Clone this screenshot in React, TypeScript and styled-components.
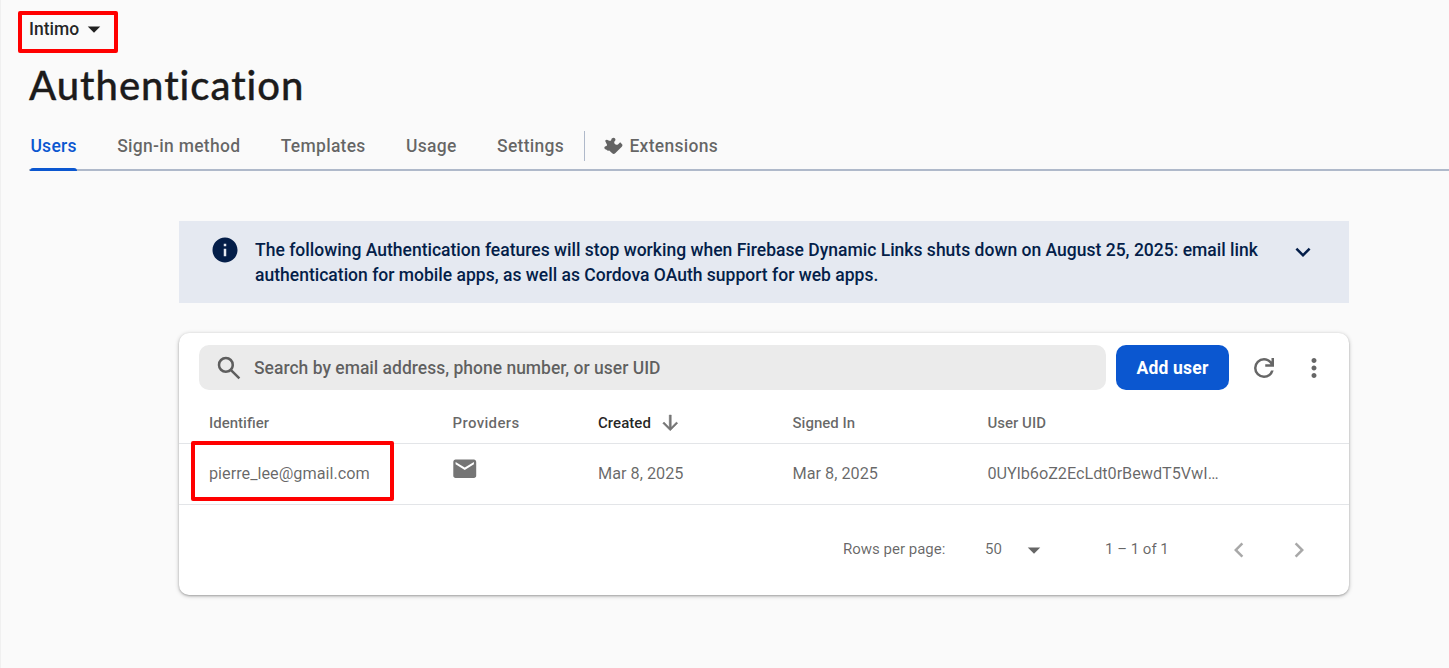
import React from "react";
import styled, { createGlobalStyle } from "styled-components";
import {
  MdArrowDropDown,
  MdChevronLeft,
  MdChevronRight,
  MdEmail,
  MdExpandMore,
  MdInfo,
  MdMoreVert,
} from "react-icons/md";

const GlobalStyle = createGlobalStyle`
  *, *::before, *::after { box-sizing: border-box; }
  body {
    margin: 0;
    background: #fafafa;
    font-family: Roboto, "Liberation Sans", sans-serif;
    color: rgba(0, 0, 0, 0.6);
  }
  button { font: inherit; color: inherit; background: none; border: 0; padding: 0; margin: 0; }
  h1, p { margin: 0; }
  svg { display: block; flex: none; }
`;

const Page = styled.div`
  height: 668px;
  overflow: hidden;
  border-left: 1px solid #f0f0f0;
  display: flex;
  flex-direction: column;
`;

const Header = styled.header`
  padding: 10px 0 0 28px;
`;

const Marker = styled.div<{ $inset: string }>`
  position: absolute;
  inset: ${(p) => p.$inset};
  border: 4px solid #ff0000;
  border-radius: 2px;
  pointer-events: none;
`;

const ProjectPicker = styled.button`
  position: relative;
  display: flex;
  align-items: center;
  height: 38px;
  padding-bottom: 1px;
  font-size: 17.5px;
  font-weight: 500;
  line-height: 38px;
  color: rgba(0, 0, 0, 0.87);
`;

const Title = styled.h1`
  height: 50px;
  margin-top: 12px;
  font-family: Lato, sans-serif;
  font-size: 40px;
  font-weight: 500;
  line-height: 50px;
  letter-spacing: 0.98px;
  -webkit-text-stroke: 0.35px #1c1b1b;
  color: #1c1b1b;
`;

const Tabs = styled.nav`
  display: flex;
  height: 61px;
  padding-left: 1px;
  border-bottom: 2px solid #afb9ca;
`;

const Tab = styled.button<{ $active?: boolean; $gap?: number }>`
  position: relative;
  display: flex;
  align-items: center;
  gap: 6px;
  height: 61px;
  padding: 11px 0 0 0.4px;
  margin-right: ${(p) => p.$gap ?? 40}px;
  font-size: 17.5px;
  font-weight: 500;
  letter-spacing: 0.28px;
  white-space: nowrap;
  color: ${(p) => (p.$active ? "#0b57d0" : "rgba(0, 0, 0, 0.6)")};
  ${(p) => p.$active && `
    &::after {
      content: "";
      position: absolute;
      left: 0;
      right: 0;
      bottom: 0;
      height: 3px;
      border-radius: 3px 3px 0 0;
      background: #0b57d0;
    }
  `}
`;

const Divider = styled.span`
  width: 1px;
  height: 30px;
  margin: 21px 18px 0 0;
  background: #afb9ca;
`;

const Content = styled.main`
  width: 1170px;
  margin: 50px 0 0 178px;
`;

const Banner = styled.section`
  display: flex;
  height: 82px;
  padding: 14px 31px 0 31px;
  background: #e5e9f1;
  color: #041e49;
`;

const BannerText = styled.p`
  flex: 1;
  margin: 3px 0 0 15px;
  font-size: 17.5px;
  font-weight: 500;
  line-height: 25px;
  letter-spacing: 0.01px;
  white-space: nowrap;
`;

const BannerToggle = styled.button`
  height: 30px;
  margin-top: 2px;
`;

const Card = styled.section`
  height: 262px;
  margin-top: 30px;
  border-radius: 10px;
  background: #fff;
  box-shadow: 0 1px 4px rgba(0, 0, 0, 0.25), 0 1px 2px rgba(0, 0, 0, 0.2);
`;

const Toolbar = styled.div`
  display: flex;
  align-items: center;
  height: 70px;
  padding: 0 20px 1px;
`;

const SearchBox = styled.div`
  display: flex;
  align-items: center;
  gap: 10px;
  width: 907px;
  height: 45px;
  padding-left: 15px;
  border-radius: 10px;
  background: #ebebeb;
  font-size: 17.5px;
  font-weight: 500;
`;

const AddButton = styled.button`
  width: 113px;
  height: 45px;
  margin-left: 10px;
  border-radius: 10px;
  background: #0b57d0;
  color: #fff;
  font-size: 17.5px;
  font-weight: 700;
  letter-spacing: 0.2px;
`;

const IconButton = styled.button<{ $ml: number; $faded?: boolean }>`
  margin-left: ${(p) => p.$ml}px;
  color: ${(p) => (p.$faded ? "rgba(0, 0, 0, 0.34)" : "inherit")};
`;

const Row = styled.div<{ $head?: boolean }>`
  display: grid;
  grid-template-columns: 243.5px 145.5px 194.5px 195px 1fr;
  align-items: center;
  height: ${(p) => (p.$head ? 41 : 61)}px;
  padding: 0 0 ${(p) => (p.$head ? 0 : 2)}px 30px;
  border-bottom: 1px solid #e3e5e8;
  font-size: ${(p) => (p.$head ? 15 : 16.25)}px;
  font-weight: ${(p) => (p.$head ? 500 : 400)};
`;

const Cell = styled.div<{ $sorted?: boolean; $tracking?: number }>`
  position: relative;
  display: flex;
  align-items: center;
  gap: 8px;
  letter-spacing: ${(p) => p.$tracking ?? 0}px;
  color: ${(p) => (p.$sorted ? "rgba(0, 0, 0, 0.87)" : "inherit")};
  svg { color: #757575; }
`;

const MailIcon = styled(MdEmail)`
  margin: -8px 0 0 -2px;
`;

const Pager = styled.div`
  display: flex;
  align-items: center;
  height: 90px;
  padding-left: 664px;
  font-size: 15px;
  white-space: nowrap;
`;

const PagerText = styled.span<{ $width: number }>`
  width: ${(p) => p.$width}px;
  padding-bottom: 2px;
`;

const PageSizeCaret = styled(MdArrowDropDown)`
  margin-right: 56px;
`;

const ExtensionIcon = () => (
  <svg width="20" height="20" viewBox="0 0 20 20" fill="currentColor">
    <path d="M2.1 4.8Q3.6 2.9 5.2 4.2Q6.8 5.3 8 4.4Q8.3 1.8 10.3 1.7Q12.8 1.7 12.4 4.2Q10.3 6 11.6 7.8Q13.3 9.6 15.2 8.3L17.2 6.2L19.3 8.6Q19.8 9.8 18.8 10.8L12.2 17.3Q10.7 18.6 9.2 17.3L6.2 14.5Q4.4 15 3.6 13.7Q1.2 13.8 1.3 11.6Q1.6 10 3.6 10.1Q4.6 8.8 3.4 7.6Z" />
  </svg>
);

const SearchIcon = () => (
  <svg width="30" height="30" viewBox="0 0 24 24" fill="currentColor">
    <path d="m19.6 21-6.3-6.3q-.75.6-1.725.95T9.5 16q-2.725 0-4.612-1.888T3 9.5t1.888-4.612T9.5 3t4.613 1.888T16 9.5q0 1.1-.35 2.075T14.7 13.3l6.3 6.3zM9.5 14q1.875 0 3.188-1.312T14 9.5t-1.312-3.187T9.5 5 6.313 6.313 5 9.5t1.313 3.188T9.5 14" />
  </svg>
);

const RefreshIcon = () => (
  <svg width="30" height="30" viewBox="0 0 24 24" fill="currentColor">
    <path d="M12 20q-3.35 0-5.675-2.325T4 12t2.325-5.675T12 4q1.725 0 3.3.713T18 6.75V4h2v7h-7V9h4.2q-.8-1.4-2.187-2.2T12 6Q9.5 6 7.75 7.75T6 12t1.75 4.25T12 18q1.925 0 3.475-1.1T17.65 14h2.1q-.7 2.65-2.85 4.325T12 20" />
  </svg>
);

const SortIcon = () => (
  <svg width="22.5" height="22.5" viewBox="0 0 24 24" fill="currentColor" stroke="currentColor" strokeWidth="0.5">
    <path d="M10.9 3.2v13l-5.5-5.5L4 12l8 8 8-8-1.4-1.3-5.5 5.5v-13z" />
  </svg>
);

export default function App() {
  return (
    <>
      <GlobalStyle />
      <Page>
        <Header>
          <ProjectPicker>
            Intimo
            <MdArrowDropDown size={30} />
            <Marker $inset="1px -8.5px -5px -11px" />
          </ProjectPicker>
          <Title>Authentication</Title>
          <Tabs>
            <Tab $active>Users</Tab>
            <Tab>Sign-in method</Tab>
            <Tab>Templates</Tab>
            <Tab>Usage</Tab>
            <Tab $gap={20}>Settings</Tab>
            <Divider />
            <Tab>
              <ExtensionIcon />
              Extensions
            </Tab>
          </Tabs>
        </Header>
        <Content>
          <Banner>
            <MdInfo size={30} />
            <BannerText>
              The following Authentication features will stop working when Firebase Dynamic Links shuts down on August 25, 2025: email link
              <br />
              authentication for mobile apps, as well as Cordova OAuth support for web apps.
            </BannerText>
            <BannerToggle>
              <MdExpandMore size={30} />
            </BannerToggle>
          </Banner>
          <Card>
            <Toolbar>
              <SearchBox>
                <SearchIcon />
                Search by email address, phone number, or user UID
              </SearchBox>
              <AddButton>Add user</AddButton>
              <IconButton $ml={20}>
                <RefreshIcon />
              </IconButton>
              <IconButton $ml={20}>
                <MdMoreVert size={30} />
              </IconButton>
            </Toolbar>
            <Row $head>
              <Cell>Identifier</Cell>
              <Cell $tracking={0.35}>Providers</Cell>
              <Cell $sorted $tracking={0.05}>
                Created
                <SortIcon />
              </Cell>
              <Cell>Signed In</Cell>
              <Cell>User UID</Cell>
            </Row>
            <Row>
              <Cell>
                pierre_lee@gmail.com
                <Marker $inset="-23px 59px -18px -18px" />
              </Cell>
              <Cell>
                <MailIcon size={27.5} />
              </Cell>
              <Cell>Mar 8, 2025</Cell>
              <Cell>Mar 8, 2025</Cell>
              <Cell $tracking={-0.04}>0UYlb6oZ2EcLdt0rBewdT5VwI…</Cell>
            </Row>
            <Pager>
              <PagerText $width={142}>Rows per page:</PagerText>
              <PagerText $width={34}>50</PagerText>
              <PageSizeCaret size={30} />
              <PagerText $width={119}>1 – 1 of 1</PagerText>
              <IconButton $ml={0} $faded>
                <MdChevronLeft size={30} />
              </IconButton>
              <IconButton $ml={30} $faded>
                <MdChevronRight size={30} />
              </IconButton>
            </Pager>
          </Card>
        </Content>
      </Page>
    </>
  );
}
